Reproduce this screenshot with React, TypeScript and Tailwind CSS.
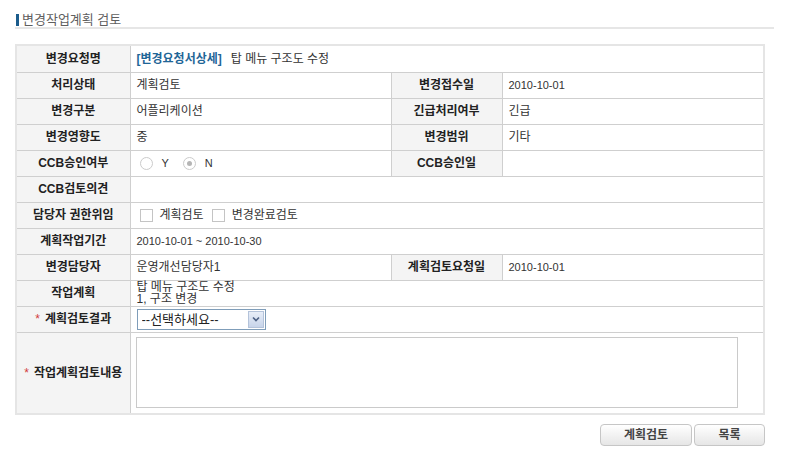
const font = "font-['Liberation_Sans','Noto_Sans_CJK_KR',sans-serif]";

function Label({ children, req }: { children: React.ReactNode; req?: boolean }) {
  return (
    <th className="h-[26px] border border-[#cfcfcf] bg-[#f4f4f4] px-1 text-center align-middle text-[12px] font-bold leading-[14px] whitespace-nowrap text-[#222]">
      {req && <span className="mr-[5px] font-normal text-[#d23c3c]">*</span>}
      {children}
    </th>
  );
}

function Cell({ children, span }: { children?: React.ReactNode; span?: number }) {
  return (
    <td
      colSpan={span}
      className="h-[26px] border border-[#cfcfcf] bg-white pl-[6px] align-middle text-[12px] leading-[14px] text-[#333]"
    >
      {children}
    </td>
  );
}

function Radio({ checked, label }: { checked?: boolean; label: string }) {
  return (
    <span className="mr-[14px] inline-flex items-center gap-[9px]">
      <span className="flex h-[13px] w-[13px] items-center justify-center rounded-full border border-[#cbcbcb] bg-white">
        {checked && <span className="h-[5px] w-[5px] rounded-full bg-[#b5b5b5]" />}
      </span>
      <span className="text-[11px] text-[#333]">{label}</span>
    </span>
  );
}

function Check({ label }: { label: string }) {
  return (
    <span className="mr-[8px] inline-flex items-center gap-[7px]">
      <span className="h-[13px] w-[13px] border border-[#c4c4c4] bg-white" />
      <span>{label}</span>
    </span>
  );
}

export default function App() {
  return (
    <div className={`min-h-screen bg-white px-[15px] pt-[14px] ${font}`}>
      <div className="w-[759px] border-b-2 border-[#e6e6e6] pb-[1px]">
        <div className="flex h-[12px] items-center gap-[3px] pl-[1px]">
          <span className="h-[12px] w-[3px] bg-[#1b5c8c]" />
          <span className="text-[13px] leading-[12px] text-[#5f5f5f]">변경작업계획 검토</span>
        </div>
      </div>

      <div className="mt-[15px] w-[750px] border-2 border-[#e5e5e5]">
        <table className="w-full table-fixed border-collapse border-hidden">
          <colgroup>
            <col className="w-[113px]" />
            <col className="w-[261px]" />
            <col className="w-[111px]" />
            <col />
          </colgroup>
          <tbody>
            <tr>
              <Label>변경요청명</Label>
              <Cell span={3}>
                <span className="font-bold text-[#1f6697]">[변경요청서상세]</span>
                <span className="ml-[9px]">탑 메뉴 구조도 수정</span>
              </Cell>
            </tr>
            <tr>
              <Label>처리상태</Label>
              <Cell>계획검토</Cell>
              <Label>변경접수일</Label>
              <Cell><span className="text-[11px]">2010-10-01</span></Cell>
            </tr>
            <tr>
              <Label>변경구분</Label>
              <Cell>어플리케이션</Cell>
              <Label>긴급처리여부</Label>
              <Cell>긴급</Cell>
            </tr>
            <tr>
              <Label>변경영향도</Label>
              <Cell>중</Cell>
              <Label>변경범위</Label>
              <Cell>기타</Cell>
            </tr>
            <tr>
              <Label>CCB승인여부</Label>
              <Cell>
                <div className="flex items-center pl-[3px]">
                  <Radio label="Y" />
                  <Radio checked label="N" />
                </div>
              </Cell>
              <Label>CCB승인일</Label>
              <Cell />
            </tr>
            <tr>
              <Label>CCB검토의견</Label>
              <Cell span={3} />
            </tr>
            <tr>
              <Label>담당자 권한위임</Label>
              <Cell span={3}>
                <div className="flex items-center pl-[3px]">
                  <Check label="계획검토" />
                  <Check label="변경완료검토" />
                </div>
              </Cell>
            </tr>
            <tr>
              <Label>계획작업기간</Label>
              <Cell span={3}>
                <span className="text-[11px]">2010-10-01 ~ 2010-10-30</span>
              </Cell>
            </tr>
            <tr>
              <Label>변경담당자</Label>
              <Cell>운영개선담당자1</Cell>
              <Label>계획검토요청일</Label>
              <Cell><span className="text-[11px]">2010-10-01</span></Cell>
            </tr>
            <tr>
              <Label>작업계획</Label>
              <Cell span={3}>
                <div className="text-[12px] leading-[12px]">
                  탑 메뉴 구조도 수정
                  <br />
                  1, 구조 변경
                </div>
              </Cell>
            </tr>
            <tr>
              <Label req>계획검토결과</Label>
              <Cell span={3}>
                <div className="relative h-[21px] w-[129px]">
                  <select className="h-[21px] w-full appearance-none border border-[#7f9db9] bg-white pl-[4px] text-[13px] leading-[19px] text-[#222] outline-none">
                    <option>--선택하세요--</option>
                  </select>
                  <span className="pointer-events-none absolute top-[2px] right-[2px] flex h-[17px] w-[16px] items-center justify-center border border-[#b4c3da] bg-gradient-to-b from-[#e8eef8] to-[#c7d4ea]">
                    <svg width="8" height="6" viewBox="0 0 8 6">
                      <path d="M1 1.5 L4 4.5 L7 1.5" fill="none" stroke="#4d6185" strokeWidth="1.6" />
                    </svg>
                  </span>
                </div>
              </Cell>
            </tr>
            <tr>
              <Label req>작업계획검토내용</Label>
              <td colSpan={3} className="h-[81px] border border-[#cfcfcf] bg-white pl-[5px] align-middle">
                <textarea className="block h-[71px] w-[602px] resize-none border border-[#cacaca] bg-white outline-none" />
              </td>
            </tr>
          </tbody>
        </table>
      </div>

      <div className="mt-[9px] flex w-[750px] justify-end gap-[2px]">
        <button
          type="button"
          className="h-[22px] w-[92px] rounded-[4px] border border-[#c6c6c6] bg-gradient-to-b from-white to-[#e6e6e6] text-[12px] font-bold text-[#444]"
        >
          계획검토
        </button>
        <button
          type="button"
          className="h-[22px] w-[71px] rounded-[4px] border border-[#c6c6c6] bg-gradient-to-b from-white to-[#e6e6e6] text-[12px] font-bold text-[#444]"
        >
          목록
        </button>
      </div>
    </div>
  );
}
